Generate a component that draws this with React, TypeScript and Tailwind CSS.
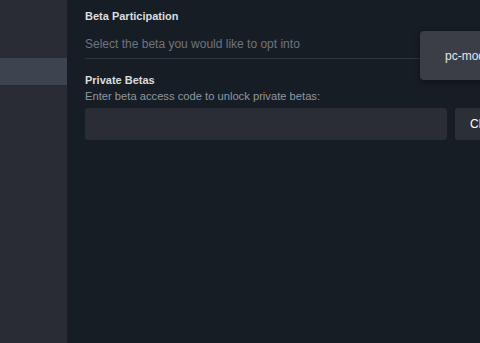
export default function App() {
  return (
    <div
      className="flex h-[343px] w-[480px] overflow-hidden bg-[#171d25]"
      style={{ fontFamily: '"Liberation Sans", Arial, sans-serif' }}
    >
      {/* left nav */}
      <div className="flex w-[67px] shrink-0 flex-col bg-[#2a2c35] pt-[58px]">
        <div className="h-[27px] bg-[#3d4450]" />
      </div>

      {/* main */}
      <div className="relative flex-1 pl-[18px]">
        <div className="pt-[9px] text-[11px] leading-[14px] font-bold text-[#dcdedf]">Beta Participation</div>
        <div className="mt-[14px] text-[12px] leading-[14px] text-[#6f757d]">
          Select the beta you would like to opt into
        </div>
        <div className="mt-[7px] mr-[60px] h-px bg-[#2f353d]" />

        <div className="mt-[14px] text-[11px] leading-[14px] font-bold text-[#dcdedf]">Private Betas</div>
        <div className="mt-[2px] text-[11.2px] leading-[14px] text-[#8f98a0]">
          Enter beta access code to unlock private betas:
        </div>
        <div className="mt-[5px] flex gap-2">
          <div className="h-[32px] w-[362px] shrink-0 rounded-[3px] bg-[#2a2d35]" />
          <button className="h-[32px] flex-1 rounded-l-[3px] bg-[#2b2f37] pl-[15px] text-left text-[12px] whitespace-nowrap overflow-hidden text-white">
            Check Code
          </button>
        </div>

        {/* dropdown (partially visible) */}
        <div className="absolute right-0 top-0 h-[28px] w-[7px] rounded-bl-[3px] bg-[#33363e]" />
        {/* dropdown popup */}
        <div className="absolute left-[353px] top-[31px] flex h-[49px] w-[80px] items-center rounded-[4px] bg-[#3b3e47] pl-[25px] text-[12px] text-[#e6e7e8] shadow-[0_2px_6px_rgba(0,0,0,0.4)] whitespace-nowrap overflow-hidden">
          pc-mod-beta
        </div>
      </div>
    </div>
  );
}
